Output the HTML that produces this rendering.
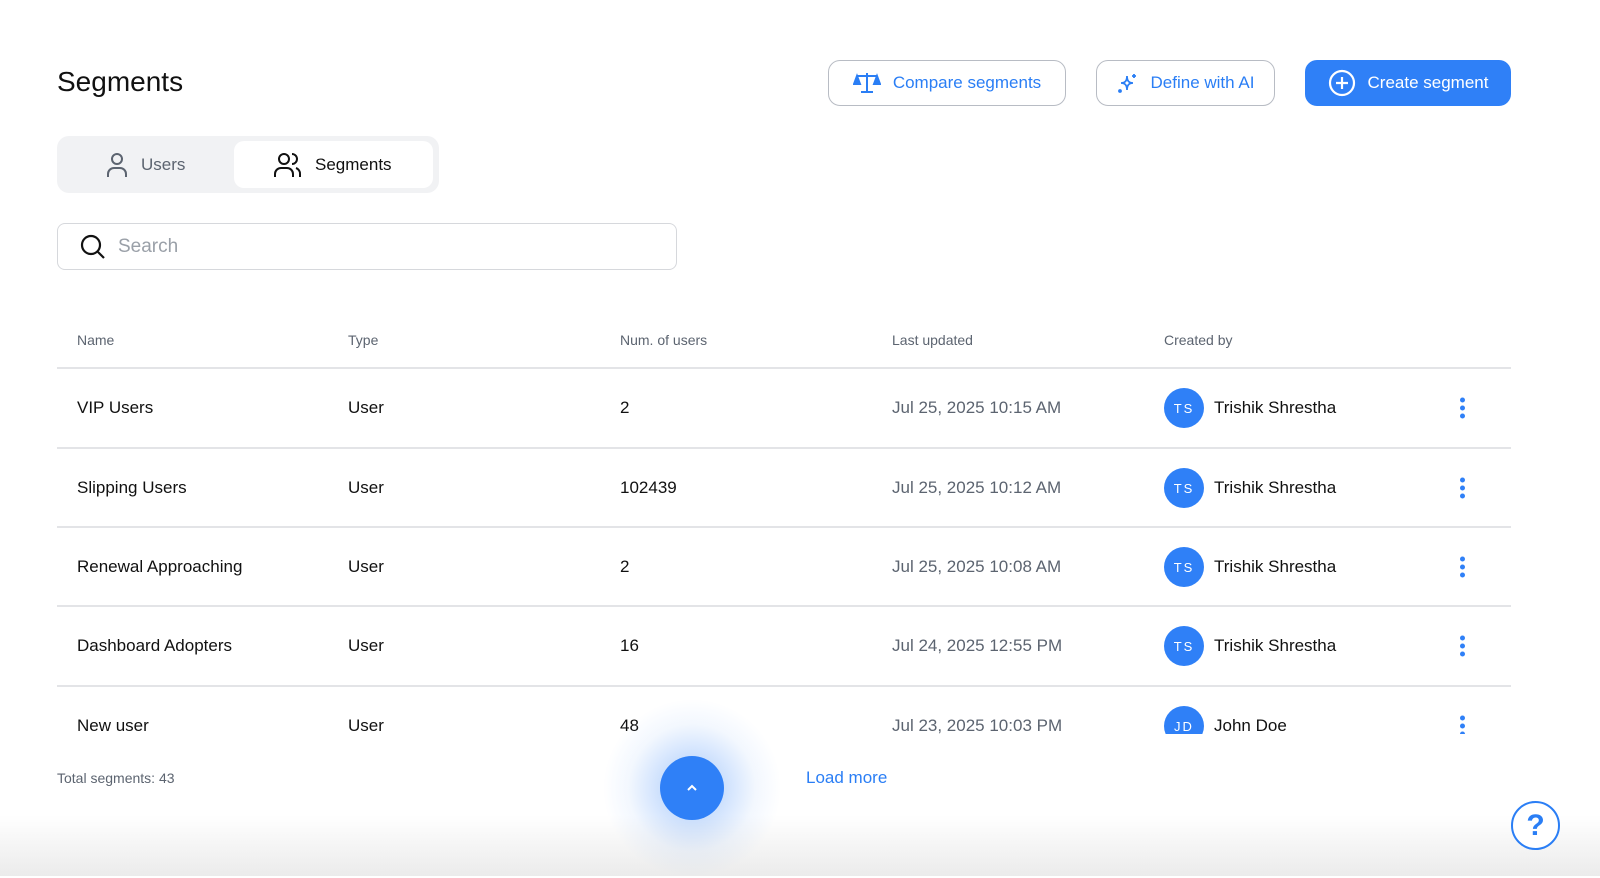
<!DOCTYPE html>
<html><head><meta charset="utf-8"><style>
*{box-sizing:border-box;margin:0;padding:0}
body{width:1600px;height:876px;background:#fff;font-family:"Liberation Sans",Arial,sans-serif;position:relative;overflow:hidden;color:#111}
.abs{position:absolute}
h1{position:absolute;left:57px;top:66px;font-size:28px;font-weight:400;color:#111}
.btn{position:absolute;top:60px;height:46px;border:1.5px solid #b8bcc4;border-radius:12px;display:flex;align-items:center;justify-content:center;gap:12px;color:#2a7ef5;font-size:17px;background:#fff}
.btn.primary{background:#2f80f7;border-color:#2f80f7;color:#fff}
.tabs{position:absolute;left:57px;top:136px;width:382px;height:57px;background:#f1f2f4;border-radius:12px}
.tab{position:absolute;top:5px;height:47px;display:flex;align-items:center;gap:12px;font-size:17px}
.search{position:absolute;left:57px;top:223px;width:620px;height:47px;border:1.5px solid #d6d8dc;border-radius:8px;display:flex;align-items:center;padding-left:22px;gap:12px;color:#9aa0a8;font-size:19px}
.th{position:absolute;top:332px;font-size:14px;color:#5c6470}
.hline{position:absolute;left:57px;width:1454px;height:1.5px;background:#e3e4e7}
.cell{position:absolute;font-size:17px;color:#111;transform:translateY(-50%)}
.date{color:#5c6470}
.av{position:absolute;width:40px;height:40px;border-radius:50%;background:#2f80f7;color:#fff;font-size:13px;letter-spacing:2px;display:flex;align-items:center;justify-content:center;transform:translateY(-50%)}
.dots{position:absolute;left:1460px;width:6px;transform:translateY(-50%)}
.dots i{display:block;width:5px;height:5px;border-radius:50%;background:#2f80f7;margin:3px 0}
</style></head><body>
<h1>Segments</h1>
<div class="btn" style="left:828px;width:238px">
<svg width="28" height="24" viewBox="0 0 28 24" fill="none" stroke="#2a7ef5" stroke-width="2"><path d="M14 2v19M8 21h12M4 5h20"/><path d="M4 5l-3 8h6zM24 5l-3 8h6z" fill="#2a7ef5"/></svg>Compare segments</div>
<div class="btn" style="left:1096px;width:179px">
<svg width="22" height="22" viewBox="0 0 22 22" fill="none" stroke="#2a7ef5" stroke-width="1.8"><path d="M10 4c0 5 2 7 6 7-4 0-6 2-6 7 0-5-2-7-6-7 4 0 6-2 6-7z"/><path d="M17 2v4M15 4h4"/><circle cx="3" cy="19" r="1" fill="#2a7ef5"/></svg>Define with AI</div>
<div class="btn primary" style="left:1305px;width:206px">
<svg width="28" height="28" viewBox="0 0 28 28" fill="none" stroke="#fff" stroke-width="2.2"><circle cx="14" cy="14" r="12"/><path d="M14 8v12M8 14h12"/></svg>Create segment</div>
<div class="tabs">
<div class="tab" style="left:48px;color:#5c6470"><svg width="24" height="26" viewBox="0 0 24 26" fill="none" stroke="#5c6470" stroke-width="2"><circle cx="12" cy="7" r="5"/><path d="M3 25v-3a6 6 0 0 1 6-6h6a6 6 0 0 1 6 6v3"/></svg>Users</div>
<div class="tab" style="left:177px;width:199px;background:#fff;border-radius:10px;padding-left:39px"><svg width="30" height="26" viewBox="0 0 30 26" fill="none" stroke="#111" stroke-width="2"><circle cx="11" cy="7" r="5"/><path d="M2 25v-3a6 6 0 0 1 6-6h6a6 6 0 0 1 6 6v3M19 2a5 5 0 0 1 0 10M23 16a6 6 0 0 1 4 6v3"/></svg>Segments</div>
</div>
<div class="search"><svg width="26" height="26" viewBox="0 0 26 26" fill="none" stroke="#111" stroke-width="2.2"><circle cx="11" cy="11" r="9"/><path d="M18 18l6 6"/></svg>Search</div>
<div class="th" style="left:77px">Name</div><div class="th" style="left:348px">Type</div><div class="th" style="left:620px">Num. of users</div><div class="th" style="left:892px">Last updated</div><div class="th" style="left:1164px">Created by</div>
<div class="hline" style="top:367px"></div><div class="hline" style="top:447px"></div><div class="hline" style="top:526px"></div><div class="hline" style="top:605px"></div><div class="hline" style="top:685px"></div>
<div style="position:absolute;left:0;top:0;width:1600px;height:734px;overflow:hidden">
<div class="cell" style="left:77px;top:408px">VIP Users</div><div class="cell" style="left:348px;top:408px">User</div><div class="cell" style="left:620px;top:408px">2</div><div class="cell date" style="left:892px;top:408px">Jul 25, 2025 10:15 AM</div><div class="av" style="left:1164px;top:408px">TS</div><div class="cell" style="left:1214px;top:408px">Trishik Shrestha</div><div class="dots" style="top:408px"><i></i><i></i><i></i></div>
<div class="cell" style="left:77px;top:488px">Slipping Users</div><div class="cell" style="left:348px;top:488px">User</div><div class="cell" style="left:620px;top:488px">102439</div><div class="cell date" style="left:892px;top:488px">Jul 25, 2025 10:12 AM</div><div class="av" style="left:1164px;top:488px">TS</div><div class="cell" style="left:1214px;top:488px">Trishik Shrestha</div><div class="dots" style="top:488px"><i></i><i></i><i></i></div>
<div class="cell" style="left:77px;top:567px">Renewal Approaching</div><div class="cell" style="left:348px;top:567px">User</div><div class="cell" style="left:620px;top:567px">2</div><div class="cell date" style="left:892px;top:567px">Jul 25, 2025 10:08 AM</div><div class="av" style="left:1164px;top:567px">TS</div><div class="cell" style="left:1214px;top:567px">Trishik Shrestha</div><div class="dots" style="top:567px"><i></i><i></i><i></i></div>
<div class="cell" style="left:77px;top:646px">Dashboard Adopters</div><div class="cell" style="left:348px;top:646px">User</div><div class="cell" style="left:620px;top:646px">16</div><div class="cell date" style="left:892px;top:646px">Jul 24, 2025 12:55 PM</div><div class="av" style="left:1164px;top:646px">TS</div><div class="cell" style="left:1214px;top:646px">Trishik Shrestha</div><div class="dots" style="top:646px"><i></i><i></i><i></i></div>
<div class="cell" style="left:77px;top:726px">New user</div><div class="cell" style="left:348px;top:726px">User</div><div class="cell" style="left:620px;top:726px">48</div><div class="cell date" style="left:892px;top:726px">Jul 23, 2025 10:03 PM</div><div class="av" style="left:1164px;top:726px">JD</div><div class="cell" style="left:1214px;top:726px">John Doe</div><div class="dots" style="top:726px"><i></i><i></i><i></i></div>
</div>
<div class="abs" style="left:0;top:815px;width:1600px;height:61px;background:linear-gradient(#fff,#ebebeb)"></div>
<div class="abs" style="left:57px;top:770px;font-size:14px;color:#5c6470">Total segments: 43</div>
<div class="abs" style="left:806px;top:768px;font-size:17px;color:#2a7ef5">Load more</div>
<div class="abs" style="left:602px;top:698px;width:180px;height:180px;border-radius:50%;background:radial-gradient(circle,rgba(47,128,247,.28) 20%,rgba(47,128,247,.06) 50%,rgba(255,255,255,0) 70%)"></div>
<div class="abs" style="left:660px;top:756px;width:64px;height:64px;border-radius:50%;background:#2f80f7;display:flex;align-items:center;justify-content:center"><svg width="14" height="10" viewBox="0 0 14 10" fill="none" stroke="#fff" stroke-width="2"><path d="M3 7l4-4 4 4"/></svg></div>
<div class="abs" style="left:1511px;top:801px;width:49px;height:49px;border-radius:50%;border:2px solid #2a7ef5;background:#fff;color:#2a7ef5;font-size:30px;font-weight:700;display:flex;align-items:center;justify-content:center">?</div>
</body></html>
